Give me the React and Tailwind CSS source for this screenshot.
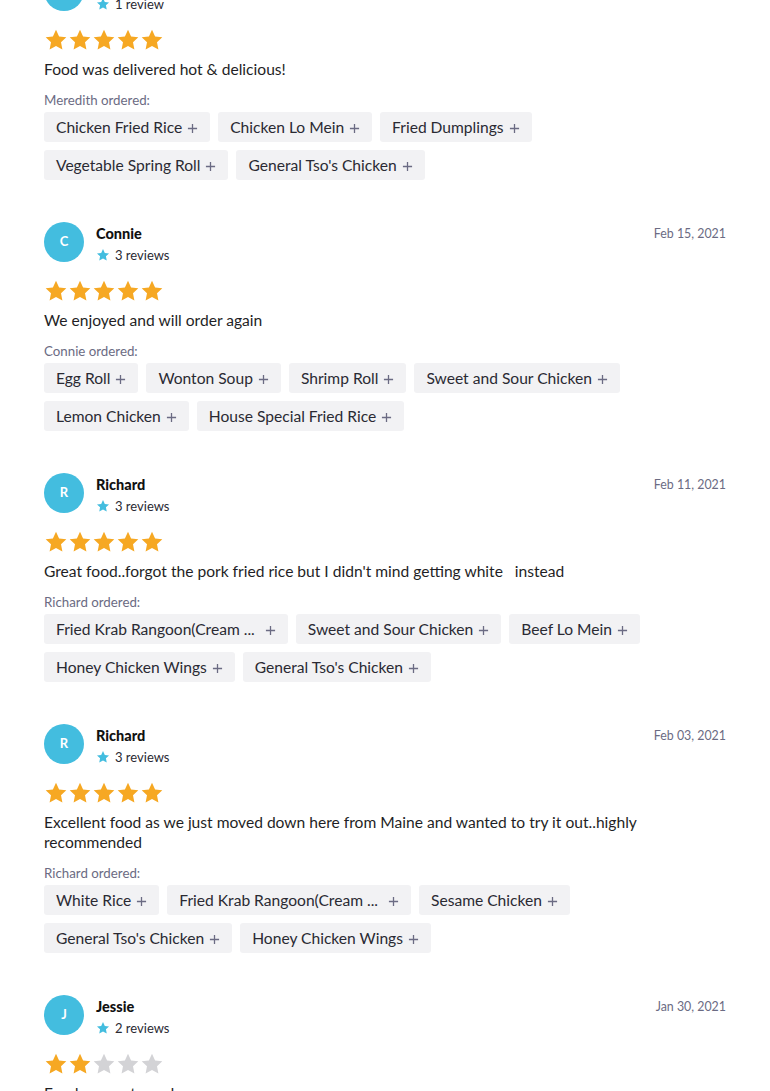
const reviews = [
  {
    initial: 'M',
    name: 'Meredith',
    count: '1 review',
    date: 'Mar 02, 2021',
    rating: 5,
    text: 'Food was delivered hot & delicious!',
    items: ['Chicken Fried Rice', 'Chicken Lo Mein', 'Fried Dumplings', 'Vegetable Spring Roll', "General Tso's Chicken"],
  },
  {
    initial: 'C',
    name: 'Connie',
    count: '3 reviews',
    date: 'Feb 15, 2021',
    rating: 5,
    text: 'We enjoyed and will order again',
    items: ['Egg Roll', 'Wonton Soup', 'Shrimp Roll', 'Sweet and Sour Chicken', 'Lemon Chicken', 'House Special Fried Rice'],
  },
  {
    initial: 'R',
    name: 'Richard',
    count: '3 reviews',
    date: 'Feb 11, 2021',
    rating: 5,
    text: "Great food..forgot the pork fried rice but I didn't mind getting white \u00a0 instead",
    items: ['Fried Krab Rangoon(Cream ...', 'Sweet and Sour Chicken', 'Beef Lo Mein', 'Honey Chicken Wings', "General Tso's Chicken"],
  },
  {
    initial: 'R',
    name: 'Richard',
    count: '3 reviews',
    date: 'Feb 03, 2021',
    rating: 5,
    text: 'Excellent food as we just moved down here from Maine and wanted to try it out..highly recommended',
    items: ['White Rice', 'Fried Krab Rangoon(Cream ...', 'Sesame Chicken', "General Tso's Chicken", 'Honey Chicken Wings'],
  },
  {
    initial: 'J',
    name: 'Jessie',
    count: '2 reviews',
    date: 'Jan 30, 2021',
    rating: 2,
    text: 'Food was not good',
    items: ['Egg Roll', 'Wonton Soup'],
  },
];

function Star({ className }) {
  return (
    <svg viewBox="0 0 24 24" className={className}>
      <path d="M12 1.8l3.1 6.6 7.2.9-5.3 5 1.4 7.1L12 17.9l-6.4 3.5 1.4-7.1-5.3-5 7.2-.9z" fill="currentColor" />
    </svg>
  );
}

function Plus() {
  return (
    <svg viewBox="0 0 12 12" className="w-[11px] h-[11px] text-[#6b6b83] shrink-0 mt-px">
      <path d="M6 1v10M1 6h10" stroke="currentColor" strokeWidth="1.4" />
    </svg>
  );
}

function Chip({ label }) {
  const cut = label.endsWith('...');
  return (
    <div className={`h-[30px] flex items-center px-3 pt-px rounded-[3px] bg-[#f2f2f4] text-[15.6px] text-[#2a2a33] ${cut ? 'gap-[10px]' : 'gap-[5px]'}`}>
      <span className="whitespace-nowrap">{label}</span>
      <Plus />
    </div>
  );
}

function Review({ r }) {
  return (
    <div className="pb-[42px]">
      <div className="flex items-start h-10">
        <div className="w-10 h-10 rounded-full bg-[#43bddf] flex items-center justify-center text-white text-[13px] font-bold shrink-0">
          {r.initial}
        </div>
        <div className="ml-3 flex-1 pt-px">
          <div className="text-[14.5px] font-black leading-[22px] text-[#111]">{r.name}</div>
          <div className="mt-px flex items-center gap-[5px] text-[13px] leading-[18px] text-[#2a2a33]">
            <Star className="w-[14px] h-[14px] text-[#43bddf]" />
            <span>{r.count}</span>
          </div>
        </div>
        <div className="pt-px text-[12.4px] leading-[22px] text-[#6b6b83]">{r.date}</div>
      </div>
      <div className="mt-[17px] flex h-6">
        {[1, 2, 3, 4, 5].map((i) => (
          <Star key={i} className={`w-6 h-6 ${i <= r.rating ? 'text-[#f6a823]' : 'text-[#d3d3d6]'}`} />
        ))}
      </div>
      <p className="mt-[7px] max-w-[640px] text-[15.6px] leading-5 text-[#1f1f26]">{r.text}</p>
      <div className="mt-3 text-[13.3px] leading-[18px] text-[#6b6b83]">{r.name} ordered:</div>
      <div className="mt-[3px] max-w-[640px] flex flex-wrap gap-2">
        {r.items.map((it, i) => (
          <Chip key={i} label={it} />
        ))}
      </div>
    </div>
  );
}

export default function App() {
  return (
    <div className="min-h-screen bg-white overflow-hidden" style={{ fontFamily: 'Lato, "Liberation Sans", sans-serif' }}>
      <div className="px-[44px] -mt-[29px]">
        {reviews.map((r, i) => (
          <Review key={i} r={r} />
        ))}
      </div>
    </div>
  );
}
